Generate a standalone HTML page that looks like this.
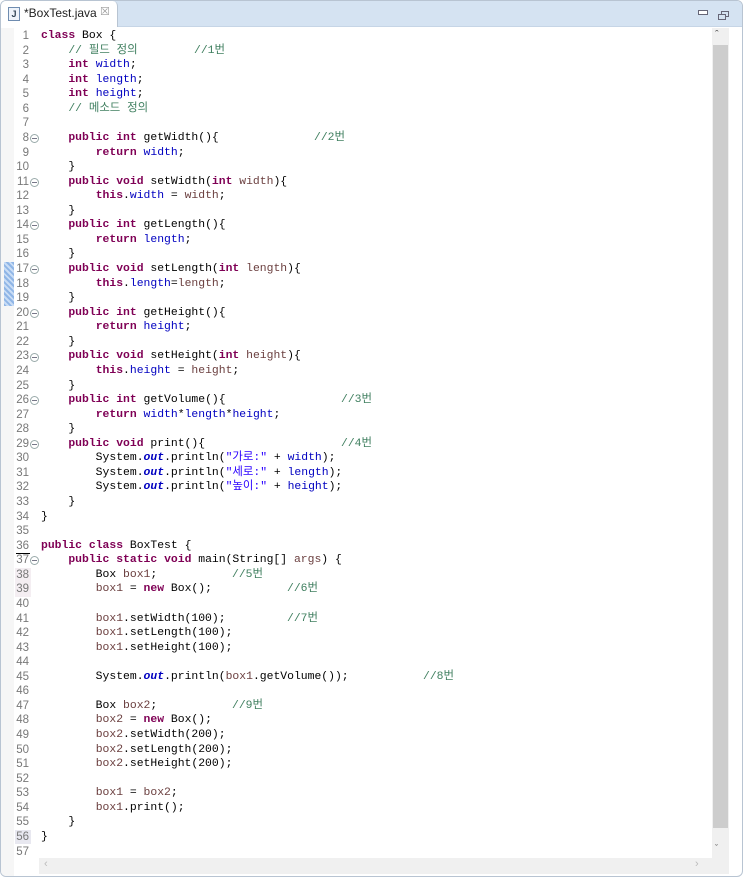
<!DOCTYPE html>
<html><head><meta charset="utf-8"><style>
body{margin:0;width:743px;height:877px;overflow:hidden;background:#fff;font-family:"Liberation Sans","Noto Sans CJK KR",sans-serif;position:relative}
.win{position:absolute;left:0;top:0;width:741px;height:875px;border:1px solid #b8c4d2;border-radius:6px;overflow:hidden;background:#fff}
.tabbar{position:absolute;left:0;top:0;width:741px;height:25px;background:#d5e3f2;border-bottom:1px solid #c6d5e6}
.tab{position:absolute;left:0;top:0;width:116px;height:26px;background:#fff;border-right:1px solid #b8c4d2;border-top-right-radius:5px;font-size:12px;color:#222}
.code{position:absolute;left:40px;top:28px;font-family:"Liberation Mono","Noto Sans CJK KR",monospace;font-size:11.4px;line-height:14.57px;color:#000}
.ln{position:absolute;left:0;top:28px;width:28px;text-align:right;font-family:"Liberation Sans",sans-serif;font-size:11.5px;line-height:14.57px;color:#787878}
.l{height:14.57px;position:relative;white-space:pre}
.k{color:#7f0055;font-weight:bold}.f{color:#0000c0}.p{color:#6a3e3e}.s{color:#2a00ff}.o{color:#0000c0;font-weight:bold;font-style:italic}
.c{color:#3f7f5f;position:absolute;top:0}
.fold{position:absolute;left:29px;width:7px;height:7px;border:1px solid #9aa;border-radius:50%;font-size:0}
.fold:after{content:"";position:absolute;left:1px;top:3px;width:5px;height:1px;background:#778}
</style></head><body><div class="win">
<div class="tabbar"></div>
<div class="tab"><div style="position:absolute;left:7px;top:6px;width:10px;height:12px;border:1px solid #6f8cb0;background:#eef3fa;font-size:9px;font-weight:bold;color:#345;text-align:center;line-height:12px">J</div><span style="position:absolute;left:23px;top:5px">*BoxTest.java</span><span style="position:absolute;left:99px;top:4px;color:#999;font-size:11px">☒</span></div>
<div style="position:absolute;left:697px;top:9px;width:8px;height:3px;border:1px solid #667;background:#fff"></div>
<div style="position:absolute;left:720px;top:10px;width:6px;height:4px;border:1px solid #667"></div><div style="position:absolute;left:717px;top:13px;width:6px;height:4px;border:1px solid #667;background:#d5e3f2"></div>
<div style="position:absolute;left:0;top:27px;width:13px;height:848px;background:#f6f6f6"></div>
<div style="position:absolute;left:3px;top:261px;width:10px;height:44px;background:repeating-linear-gradient(45deg,#8fb5e6 0 2px,#c8dcf5 2px 4px);"></div>
<div style="position:absolute;left:15px;top:552px;width:14px;height:1px;background:#000"></div>
<div style="position:absolute;left:14px;top:567px;width:16px;height:29px;background:#f4eef2"></div>
<div style="position:absolute;left:14px;top:829px;width:16px;height:14px;background:#e8e8f0"></div>
<div class="ln"><div>1</div><div>2</div><div>3</div><div>4</div><div>5</div><div>6</div><div>7</div><div>8</div><div>9</div><div>10</div><div>11</div><div>12</div><div>13</div><div>14</div><div>15</div><div>16</div><div>17</div><div>18</div><div>19</div><div>20</div><div>21</div><div>22</div><div>23</div><div>24</div><div>25</div><div>26</div><div>27</div><div>28</div><div>29</div><div>30</div><div>31</div><div>32</div><div>33</div><div>34</div><div>35</div><div>36</div><div>37</div><div>38</div><div>39</div><div>40</div><div>41</div><div>42</div><div>43</div><div>44</div><div>45</div><div>46</div><div>47</div><div>48</div><div>49</div><div>50</div><div>51</div><div>52</div><div>53</div><div>54</div><div>55</div><div>56</div><div>57</div></div>
<div class="fold" style="top:133px"></div><div class="fold" style="top:177px"></div><div class="fold" style="top:220px"></div><div class="fold" style="top:264px"></div><div class="fold" style="top:308px"></div><div class="fold" style="top:352px"></div><div class="fold" style="top:395px"></div><div class="fold" style="top:439px"></div><div class="fold" style="top:555px"></div>
<div class="code">
<div class="l"><span class="k">class</span> Box {</div>
<div class="l">    <span style="color:#3f7f5f">// 필드 정의</span><span class="c" style="left:153px">//1번</span></div>
<div class="l">    <span class="k">int</span> <span class="f">width</span>;</div>
<div class="l">    <span class="k">int</span> <span class="f">length</span>;</div>
<div class="l">    <span class="k">int</span> <span class="f">height</span>;</div>
<div class="l">    <span style="color:#3f7f5f">// 메소드 정의</span></div>
<div class="l"> </div>
<div class="l">    <span class="k">public</span> <span class="k">int</span> getWidth(){<span class="c" style="left:273px">//2번</span></div>
<div class="l">        <span class="k">return</span> <span class="f">width</span>;</div>
<div class="l">    }</div>
<div class="l">    <span class="k">public</span> <span class="k">void</span> setWidth(<span class="k">int</span> <span class="p">width</span>){</div>
<div class="l">        <span class="k">this</span>.<span class="f">width</span> = <span class="p">width</span>;</div>
<div class="l">    }</div>
<div class="l">    <span class="k">public</span> <span class="k">int</span> getLength(){</div>
<div class="l">        <span class="k">return</span> <span class="f">length</span>;</div>
<div class="l">    }</div>
<div class="l">    <span class="k">public</span> <span class="k">void</span> setLength(<span class="k">int</span> <span class="p">length</span>){</div>
<div class="l">        <span class="k">this</span>.<span class="f">length</span>=<span class="p">length</span>;</div>
<div class="l">    }</div>
<div class="l">    <span class="k">public</span> <span class="k">int</span> getHeight(){</div>
<div class="l">        <span class="k">return</span> <span class="f">height</span>;</div>
<div class="l">    }</div>
<div class="l">    <span class="k">public</span> <span class="k">void</span> setHeight(<span class="k">int</span> <span class="p">height</span>){</div>
<div class="l">        <span class="k">this</span>.<span class="f">height</span> = <span class="p">height</span>;</div>
<div class="l">    }</div>
<div class="l">    <span class="k">public</span> <span class="k">int</span> getVolume(){<span class="c" style="left:300px">//3번</span></div>
<div class="l">        <span class="k">return</span> <span class="f">width</span>*<span class="f">length</span>*<span class="f">height</span>;</div>
<div class="l">    }</div>
<div class="l">    <span class="k">public</span> <span class="k">void</span> print(){<span class="c" style="left:300px">//4번</span></div>
<div class="l">        System.<span class="o">out</span>.println(<span class="s">"가로:"</span> + <span class="f">width</span>);</div>
<div class="l">        System.<span class="o">out</span>.println(<span class="s">"세로:"</span> + <span class="f">length</span>);</div>
<div class="l">        System.<span class="o">out</span>.println(<span class="s">"높이:"</span> + <span class="f">height</span>);</div>
<div class="l">    }</div>
<div class="l">}</div>
<div class="l"> </div>
<div class="l"><span class="k">public</span> <span class="k">class</span> BoxTest {</div>
<div class="l">    <span class="k">public</span> <span class="k">static</span> <span class="k">void</span> main(String[] <span class="p">args</span>) {</div>
<div class="l">        Box <span class="p">box1</span>;<span class="c" style="left:191px">//5번</span></div>
<div class="l">        <span class="p">box1</span> = <span class="k">new</span> Box();<span class="c" style="left:246px">//6번</span></div>
<div class="l"> </div>
<div class="l">        <span class="p">box1</span>.setWidth(100);<span class="c" style="left:246px">//7번</span></div>
<div class="l">        <span class="p">box1</span>.setLength(100);</div>
<div class="l">        <span class="p">box1</span>.setHeight(100);</div>
<div class="l"> </div>
<div class="l">        System.<span class="o">out</span>.println(<span class="p">box1</span>.getVolume());<span class="c" style="left:382px">//8번</span></div>
<div class="l"> </div>
<div class="l">        Box <span class="p">box2</span>;<span class="c" style="left:191px">//9번</span></div>
<div class="l">        <span class="p">box2</span> = <span class="k">new</span> Box();</div>
<div class="l">        <span class="p">box2</span>.setWidth(200);</div>
<div class="l">        <span class="p">box2</span>.setLength(200);</div>
<div class="l">        <span class="p">box2</span>.setHeight(200);</div>
<div class="l"> </div>
<div class="l">        <span class="p">box1</span> = <span class="p">box2</span>;</div>
<div class="l">        <span class="p">box1</span>.print();</div>
<div class="l">    }</div>
<div class="l">}</div>
<div class="l"> </div>
</div>
<div style="position:absolute;left:711px;top:27px;width:17px;height:830px;background:#f0f0f0"></div>
<div style="position:absolute;left:712px;top:44px;width:15px;height:783px;background:#cdcdcd"></div>
<div style="position:absolute;left:714px;top:28px;font-size:11px;color:#555">&#710;</div>
<div style="position:absolute;left:714px;top:842px;font-size:9px;color:#555">&#711;</div>
<div style="position:absolute;left:38px;top:857px;width:690px;height:16px;background:#f0f0f0"></div>
<div style="position:absolute;left:43px;top:857px;font-size:11px;color:#bbb">‹</div>
<div style="position:absolute;left:694px;top:857px;font-size:11px;color:#bbb">›</div>
</div></body></html>
